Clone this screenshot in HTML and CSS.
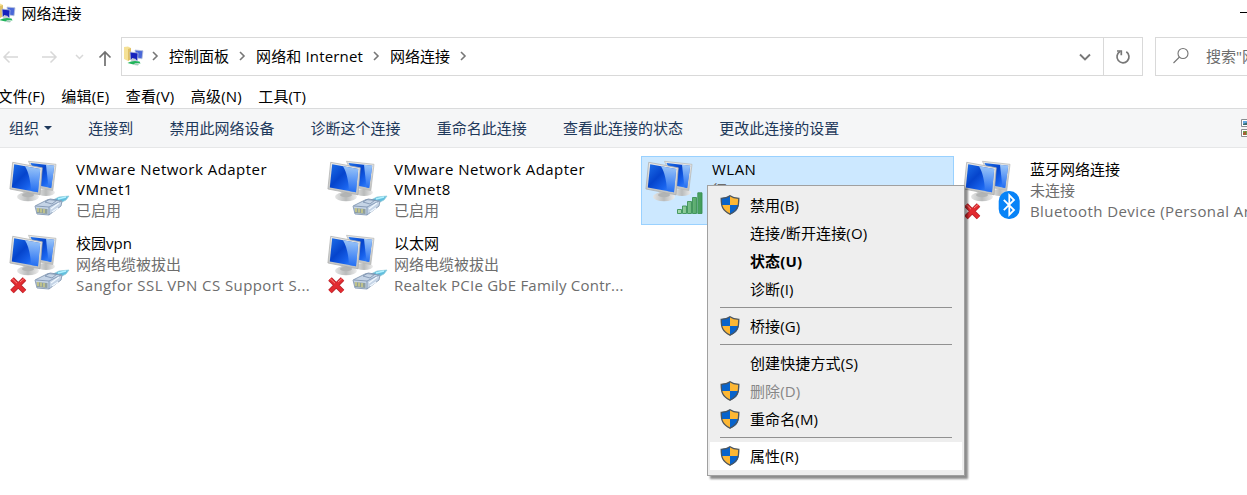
FILE: index.html
```html
<!DOCTYPE html>
<html lang="zh-CN">
<head>
<meta charset="utf-8">
<title>网络连接</title>
<link rel="stylesheet" href="styles.css">
</head>
<body>
<svg class="defs" width="0" height="0" aria-hidden="true">
  <defs>
    <linearGradient id="screen" x1="0" y1="0" x2="1" y2="1"><stop offset="0" stop-color="#1e70ea"/><stop offset=".4" stop-color="#0544cc"/><stop offset=".7" stop-color="#1964ee"/><stop offset="1" stop-color="#4c98ff"/></linearGradient>
    <linearGradient id="shine" x1="0" y1="0" x2="0" y2="1"><stop offset="0" stop-color="#b5dcff"/><stop offset="1" stop-color="#1f69f0"/></linearGradient>
    <linearGradient id="metal" x1="0" y1="0" x2="0" y2="1"><stop offset="0" stop-color="#e9e9e7"/><stop offset="1" stop-color="#c0c1c0"/></linearGradient>
    <linearGradient id="base" x1="0" y1="0" x2="1" y2="0"><stop offset="0" stop-color="#e4e5e5"/><stop offset=".5" stop-color="#b9bbbb"/><stop offset="1" stop-color="#ededed"/></linearGradient>
    <linearGradient id="bar" x1="0" y1="0" x2="1" y2="0"><stop offset="0" stop-color="#a9dcb0"/><stop offset="1" stop-color="#3d9a57"/></linearGradient>
    <symbol id="pcs" viewBox="0 0 62 62">
      <ellipse cx="38" cy="34.500" rx="9" ry="3.500" fill="url(#base)"/>
      <path d="M20.500 3.300 48 6.300 44.800 32.500 32 30z" fill="url(#metal)" stroke="#b4b6b5" stroke-width=".7"/>
      <path d="M22.500 5 46.200 7.800 43.200 30 33 28z" fill="url(#screen)"/>
      <path d="M38 6.800 46.200 7.800 43.200 30 40.500 29.500z" fill="url(#shine)" opacity=".85"/>
      <path d="M16 33 25 35 26 38.500 14 37.500z" fill="#c3c5c4"/>
      <ellipse cx="20" cy="38.700" rx="11" ry="4.600" fill="url(#base)"/>
      <ellipse cx="20" cy="37" rx="6" ry="2.200" fill="#b2b4b4"/>
      <path d="M4.700 4.300 34.300 9.800 32 36.800 1.900 31z" fill="url(#metal)" stroke="#a9abab" stroke-width=".7"/>
      <path d="M6.200 6.200 32.200 11 30 34.300 3.800 29.400z" fill="url(#screen)"/>
      <path d="M17 8.200 32.200 11 30 34.300 23 33C22.500 22 20.500 14 17 8.200z" fill="url(#shine)" opacity=".85"/>
    </symbol>
    <symbol id="plug" viewBox="0 0 62 62">
      <path d="M45 42 51 39 61 38 58 42 50 46z" fill="#61bedd" stroke="#91ccda" stroke-width=".7"/>
      <path d="m50 41 8-2" stroke="#b1f1ff" stroke-width="1.500"/>
      <path d="M27 48 40 41.500 54 43 53 48 41 57 29 56z" fill="#c5d4e6" stroke="#8599b2" stroke-width=".9"/>
      <path d="M28 48 41 49 53 43M41 49v8M37 44l5-3 7 1-5 4z" fill="none" stroke="#8095b2" stroke-width=".9"/>
      <path d="m28.500 50 11 1v5l-10.500-1z" fill="#8f9f9e"/>
      <path d="M30 50v4M33 50.500v4M36 51v4" stroke="#d8d584" stroke-width="1.300"/>
      <path d="m43 51 8-6M44 54l6-4" stroke="#f0f8ff" stroke-width="1.400"/>
    </symbol>
    <symbol id="cross" viewBox="0 0 62 62">
      <path d="M4 47 16.500 59.500M16.500 47 4 59.500" stroke="#b5242c" stroke-width="5"/>
      <path d="M4 47 16.500 59.500M16.500 47 4 59.500" stroke="#e22b30" stroke-width="3.500"/>
      <path d="m4 46.500 5 4.700M16 46.500l-4 3.500" stroke="#fa8581" stroke-width="1"/>
    </symbol>
    <symbol id="signal" viewBox="0 0 62 62">
      <g fill="url(#bar)" stroke="#3b9155" stroke-width=".9">
        <path d="M33.500 51.500h4v4h-4zM38.500 48h4v7.500h-4zM43.500 43.500h4v12h-4zM48.500 39.500h4v16h-4zM53.800 34.800h4.200v20.700h-4.200z"/>
      </g>
    </symbol>
    <symbol id="bluetooth" viewBox="0 0 62 62">
      <rect x="36.700" y="33" width="21" height="28" rx="10" fill="#0883f7"/>
      <path d="m41.800 41.800 10.200 10.200-4.700 4.800v-19.600l4.700 4.800-10.200 10.200" fill="none" stroke="#fff" stroke-width="1.800"/>
    </symbol>
    <symbol id="shield" viewBox="0 0 20 20">
      <path d="M10 .6C7.500 2.400 4.800 3 1 3.200 1 10.500 1.800 15.500 10 19.400 18.200 15.500 19 10.500 19 3.200 15.200 3 12.500 2.400 10 .6z" fill="#fdb734"/>
      <path d="M10 .6C7.500 2.400 4.800 3 1 3.200L1.300 10H10zM10 10h8.700c-.7 4.700-3 7.200-8.700 9.400z" fill="#0863cb"/>
      <path d="M10 .8C7.500 2.600 4.800 3.200 1.200 3.400 1.200 10.500 2 15.300 10 19.200 18 15.300 18.800 10.500 18.800 3.400 15.200 3.200 12.500 2.600 10 .8z" fill="none" stroke="#4b5560" stroke-width="1.300"/>
    </symbol>
    <symbol id="folder" viewBox="0 0 20 20">
      <path d="M0 1 4 .5 7 2v11l-3 2-4-2z" fill="#f5e196"/>
      <path d="m4 3 3-1v11l-3 2z" fill="#dfc067"/>
      <path d="m11 4 8 .8-1 8-6-1z" fill="#4a68d8" stroke="#b9c3dc" stroke-width=".8"/>
      <path d="m6 6 8 1-.5 7.500-7-1z" fill="#1622bd" stroke="#b4bfdd" stroke-width=".8"/>
      <path d="m8 12 4 1-1 3-4-1z" fill="#c7cdd2"/>
      <path d="M3.500 17q5-3 12-1.500l1 2q-5-1-7 1z" fill="#21b45b"/>
      <path d="m11 17 4 1-1 1.500-4-.5z" fill="#a9ccbd"/>
    </symbol>
    <symbol id="chev" viewBox="0 0 8 10"><path d="m2 1 4 4-4 4" fill="none" stroke="#777" stroke-width="1.600"/></symbol>
  </defs>
</svg>

<div class="window">
  <header class="titlebar">
    <svg class="app-icon"><use href="#folder"/></svg>
    <span class="title">网络连接</span>
    <span class="minimize"></span>
  </header>

  <div class="navrow">
    <div class="arrows">
      <svg width="120" height="39" fill="none">
        <path d="M18 20H4M9.500 14.500 4 20l5.500 5.500M42 20h14M50.500 14.500 56 20l-5.500 5.500" stroke="#d8d8d8" stroke-width="1.500"/>
        <path d="m76 18 3.500 3.500L83 18" stroke="#d8d8d8" stroke-width="1.500"/>
        <path d="M105 29V15M99.500 20.500 105 15l5.500 5.500" stroke="#707070" stroke-width="1.700"/>
      </svg>
    </div>
    <div class="address">
      <svg class="address-icon"><use href="#folder"/></svg>
      <svg class="chev"><use href="#chev"/></svg>
      <span class="crumb">控制面板</span>
      <svg class="chev"><use href="#chev"/></svg>
      <span class="crumb wide">网络和 Internet</span>
      <svg class="chev"><use href="#chev"/></svg>
      <span class="crumb">网络连接</span>
      <svg class="chev"><use href="#chev"/></svg>
      <svg class="drop" width="12" height="8"><path d="m1 1.500 5 5 5-5" fill="none" stroke="#777" stroke-width="1.900"/></svg>
      <span class="refresh"><svg width="16" height="16" viewBox="0 0 16 16" fill="none" stroke="#777" stroke-width="1.700"><path d="M11.300 2.800A6 6 0 1 1 5 2.600"/><path d="M2 2h4.300v4.300"/></svg></span>
    </div>
    <div class="search">
      <svg width="18" height="18" fill="none" stroke="#747474" stroke-width="1.100"><circle cx="11" cy="6.500" r="5"/><path d="M7.500 10 1.500 16"/></svg>
      <span>搜索"网络连接"</span>
    </div>
  </div>

  <nav class="menubar">
    <span>文件(F)</span><span>编辑(E)</span><span>查看(V)</span><span>高级(N)</span><span>工具(T)</span>
  </nav>

  <div class="toolbar">
    <span class="organize">组织<i class="caret"></i></span>
    <span>连接到</span><span>禁用此网络设备</span><span>诊断这个连接</span><span>重命名此连接</span><span>查看此连接的状态</span><span>更改此连接的设置</span>
    <svg class="view" width="20" height="20"><path d="M.500 1.500h19v7H.500zM.500 11.500h19v7H.500z" fill="#fff" stroke="#898c90"/><path d="M2 3h5v4H2z" fill="#65a8e0"/><path d="m2 6 5-2v3H2z" fill="#376d70"/><path d="M2 13h5v4H2z" fill="#6ba751"/><path d="m2 15 3-2v4H2z" fill="#a55d35"/></svg>
  </div>

  <main class="connections">
    <article class="item">
      <div class="icon"><svg><use href="#pcs"/><use href="#plug"/></svg></div>
      <div class="info"><p class="name latin">VMware Network Adapter VMnet1</p><p class="sub">已启用</p></div>
    </article>
    <article class="item">
      <div class="icon"><svg><use href="#pcs"/><use href="#plug"/></svg></div>
      <div class="info"><p class="name latin">VMware Network Adapter VMnet8</p><p class="sub">已启用</p></div>
    </article>
    <article class="item selected">
      <div class="icon"><svg><use href="#pcs"/><use href="#signal"/></svg></div>
      <div class="info"><p class="name latin">WLAN</p><p class="sub">征</p></div>
    </article>
    <article class="item">
      <div class="icon"><svg><use href="#pcs"/><use href="#cross"/><use href="#bluetooth"/></svg></div>
      <div class="info overflow"><p class="name">蓝牙网络连接</p><p class="sub">未连接</p><p class="sub device">Bluetooth Device (Personal Area Network)</p></div>
    </article>
    <article class="item">
      <div class="icon"><svg><use href="#pcs"/><use href="#plug"/><use href="#cross"/></svg></div>
      <div class="info"><p class="name">校园vpn</p><p class="sub">网络电缆被拔出</p><p class="sub device">Sangfor SSL VPN CS Support S...</p></div>
    </article>
    <article class="item">
      <div class="icon"><svg><use href="#pcs"/><use href="#plug"/><use href="#cross"/></svg></div>
      <div class="info"><p class="name">以太网</p><p class="sub">网络电缆被拔出</p><p class="sub device tight">Realtek PCIe GbE Family Contr...</p></div>
    </article>
  </main>

  <div class="context">
    <div class="entry"><svg><use href="#shield"/></svg><span>禁用(B)</span></div>
    <div class="entry"><span>连接/断开连接(O)</span></div>
    <div class="entry default"><span>状态(U)</span></div>
    <div class="entry"><span>诊断(I)</span></div>
    <div class="sep"></div>
    <div class="entry"><svg><use href="#shield"/></svg><span>桥接(G)</span></div>
    <div class="sep"></div>
    <div class="entry"><span>创建快捷方式(S)</span></div>
    <div class="entry disabled"><svg><use href="#shield"/></svg><span>删除(D)</span></div>
    <div class="entry"><svg><use href="#shield"/></svg><span>重命名(M)</span></div>
    <div class="sep"></div>
    <div class="entry hover"><svg><use href="#shield"/></svg><span>属性(R)</span></div>
  </div>
</div>
</body>
</html>
```
FILE: styles.css
```css
* { box-sizing: border-box; }
body {
  margin: 0;
  overflow: hidden;
  background: #fff;
  color: #000;
  font: 15px/20px "Open Sans", "Noto Sans CJK SC", sans-serif;
}
p { margin: 0; }
svg { display: block; flex: none; }
.defs { position: absolute; }
.window { position: relative; width: 1247px; height: 495px; overflow: hidden; white-space: nowrap; }

.titlebar { display: flex; align-items: center; height: 28px; padding-bottom: 2px; }
.app-icon { width: 20px; height: 20px; margin-left: -4px; }
.title { margin-left: 5.500px; }
.minimize { width: 7px; height: 1px; margin-left: auto; margin-top: -1px; background: #000; }

.navrow { display: flex; height: 39px; margin-top: 9px; }
.arrows { width: 121px; flex: none; }
.address { display: flex; align-items: center; width: 1022px; flex: none; border: 1px solid #d9d9d9; }
.address-icon { width: 20px; height: 20px; margin: -2px 7px 0 2px; }
.chev { width: 8px; height: 10px; margin-top: -2px; }
.crumb { margin: -2px 9px 0 10px; flex: none; }
.wide { width: 107px; letter-spacing: .15px; }
.drop { margin-left: auto; margin-right: 12px; }
.refresh { display: grid; place-items: center; width: 39px; height: 37px; border-left: 1px solid #d9d9d9; }
.search { display: flex; align-items: center; gap: 16px; width: 200px; margin-left: 12px; padding-left: 16px; padding-bottom: 2px; flex: none; border: 1px solid #d9d9d9; color: #6d6d6d; }

.menubar { display: flex; gap: 16.500px; height: 32px; padding-top: 10px; margin-left: -2.500px; letter-spacing: .15px; }

.toolbar { display: flex; align-items: center; gap: 36.200px; height: 40px; padding-left: 9px; border-top: 1px solid #dadbdc; border-bottom: 1px solid #e6e7e8; background: #f5f6f7; color: #1e395b; }
.toolbar > * { flex: none; }
.organize { display: flex; align-items: center; }
.caret { margin-left: 5px; border: 4px solid transparent; border-top-color: #1e395b; border-bottom: 0; }
.view { margin-left: auto; margin-right: -14px; }

.connections { display: grid; grid-template-columns: repeat(4, 313px); grid-auto-rows: 69px; gap: 5px; padding: 8px 0 0 5px; }
.item { display: flex; padding: 2px 3px 0; border: 1px solid transparent; }
.selected { border-color: #99d1ff; background: #cce8ff; }
.icon { width: 62px; flex: none; margin-left: -1px; margin-top: -1px; }
.icon svg { width: 62px; height: 62px; }
.info { width: 240px; margin-left: 6px; white-space: normal; }
.overflow { white-space: nowrap; }
.latin { letter-spacing: .48px; }
.device { letter-spacing: .42px; }
.tight { letter-spacing: .22px; }
.sub { line-height: 21px; color: #6d6d6d; }
.name + .sub { margin-top: 1px; }

.context { position: absolute; left: 707px; top: 185px; width: 258px; height: 291px; padding: 5px 2px; border: 1px solid #a0a0a0; background: #eee; box-shadow: 3px 3px 2px rgba(0, 0, 0, .45); letter-spacing: .12px; }
.entry { display: grid; grid-template-columns: 20px 1fr; column-gap: 10px; align-items: center; height: 28px; padding-left: 10px; }
.entry svg { width: 20px; height: 20px; margin-top: -1px; }
.entry span { grid-column: 2; }
.default { font-weight: 700; }
.disabled { color: #6d6d6d; }
.disabled span { opacity: .8; }
.hover { background: #fff; }
.sep { height: 1px; margin: 4px 10px; background: #919191; }
```
